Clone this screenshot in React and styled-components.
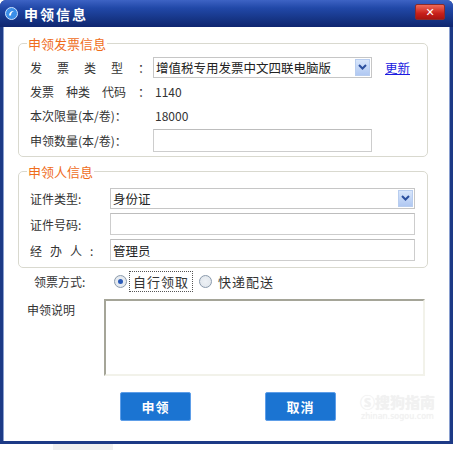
import React from 'react';
import styled, { createGlobalStyle } from 'styled-components';

const Global = createGlobalStyle`
  body {
    margin: 0;
    background: #ffffff;
    font-family: "Noto Sans CJK SC", "DejaVu Sans", sans-serif;
    font-size: 12px;
    color: #333;
  }
`;

const Win = styled.div`
  position: relative;
  width: 453px;
  height: 444px;
  box-sizing: border-box;
  display: flex;
  flex-direction: column;
  background: #1d3a86;
  border-radius: 6px 6px 0 0;
  padding: 0 3px 3px 3px;
`;

const TitleBar = styled.div`
  height: 27px;
  margin: 0 -3px;
  padding: 0 8px 0 5px;
  display: flex;
  align-items: center;
  gap: 6px;
  border-radius: 6px 6px 0 0;
  background: linear-gradient(#3d63c4 0%, #2148a8 30%, #163586 70%, #0f2670 100%);
`;

const Title = styled.span`
  color: #fff;
  font-weight: bold;
  font-size: 14px;
  letter-spacing: 2px;
  flex: 1;
`;

const CloseBtn = styled.div`
  width: 28px;
  height: 14px;
  border-radius: 2px;
  margin-top: -4px;
  background: linear-gradient(#f06a58, #c8201a 60%, #a81410);
  border: 1px solid #8b2a2a;
  display: flex;
  align-items: center;
  justify-content: center;
  color: #fff;
  font-size: 11px;
  font-weight: bold;
  line-height: 1;
`;

const Body = styled.div`
  flex: 1;
  background: #fff;
  border-left: 1px solid #8aa0d0;
  border-right: 1px solid #8aa0d0;
  padding: 7px 21px 0 14px;
  display: flex;
  flex-direction: column;
`;

const Group = styled.fieldset`
  margin: 0;
  border: 1px solid #d9d9cf;
  border-radius: 5px;
  padding: ${({ $pad }) => $pad || '4px 10px 8px 11px'};
  display: flex;
  flex-direction: column;
  gap: ${({ $gap }) => $gap || '3px'};
  & + & {
    margin-top: 5px;
  }
`;

const Legend = styled.legend`
  color: #ef6d1c;
  font-size: 13px;
  padding: 0 1px;
  margin-left: -3px;
`;

const Row = styled.div`
  display: flex;
  align-items: center;
  height: ${({ $h }) => $h || 21}px;
`;

const Label = styled.span`
  width: ${({ $w }) => $w}px;
  flex: none;
  white-space: pre;
`;

const Spaced = styled.span`
  letter-spacing: ${({ $ls }) => $ls}px;
`;

const Value = styled.span`
  padding-left: 2px;
`;

const Select = styled.div`
  width: ${({ $w }) => $w}px;
  height: 21px;
  box-sizing: border-box;
  border: 1px solid #c6c6c6;
  display: flex;
  align-items: center;
  padding-left: 2px;
  font-size: 12.5px;
  color: #222;
  overflow: hidden;
`;

const SelectText = styled.span`
  flex: 1;
  white-space: nowrap;
  overflow: hidden;
`;

const Arrow = styled.span`
  width: 15px;
  height: 17px;
  margin-right: 1px;
  flex: none;
  background: linear-gradient(#d8e6fb, #b0c8f2);
  border: 1px solid #b8cdef;
  box-sizing: border-box;
  display: flex;
  align-items: center;
  justify-content: center;
`;

const Input = styled.div`
  width: ${({ $w }) => $w}px;
  height: ${({ $hh }) => $hh || 22}px;
  box-sizing: border-box;
  border: 1px solid #cdcdcd;
  border-top-color: #bdbdbd;
  padding-left: 2px;
  display: flex;
  align-items: center;
  font-size: 12.5px;
  color: #222;
`;

const Link = styled.a`
  color: #1a1ae0;
  text-decoration: underline;
  margin-left: 13px;
  font-size: 12.5px;
`;

const Radio = styled.span`
  width: 11px;
  height: 11px;
  border-radius: 50%;
  border: 1px solid #8a9aac;
  background: radial-gradient(circle, #eef2f6 0%, #dfe4ea 100%);
  display: inline-flex;
  align-items: center;
  justify-content: center;
  margin-right: 2px;
  &::after {
    content: '';
    display: ${({ $on }) => ($on ? 'block' : 'none')};
    width: 5px;
    height: 5px;
    border-radius: 50%;
    background: #2a5ab8;
  }
`;

const RadioText = styled.span`
  padding: 0 3px;
  border: 1px dotted ${({ $focus }) => ($focus ? '#555' : 'transparent')};
  margin-right: 6px;
  font-size: 13px;
  letter-spacing: 1px;
`;

const Textarea = styled.div`
  width: 321px;
  height: 77px;
  box-sizing: border-box;
  border: 2px solid #f2f2ea;
  border-top-color: #a5a598;
  border-left-color: #a5a598;
  margin-left: 11px;
`;

const Buttons = styled.div`
  display: flex;
  gap: 74px;
  padding-left: 102px;
  margin-top: 13px;
`;

const Button = styled.button`
  width: 71px;
  height: 29px;
  border: 1px solid #5e9ee8;
  border-radius: 2px;
  background: #1b74d2;
  color: #fff;
  font-family: inherit;
  font-weight: bold;
  font-size: 13px;
  letter-spacing: 1px;
`;

const Watermark = styled.div`
  position: absolute;
  right: 18px;
  bottom: 22px;
  color: rgba(242, 242, 242, 0.95);
  text-shadow: 0 0 1px rgba(0, 0, 0, 0.08);
  text-align: center;
  line-height: 1.3;
`;

const WmBig = styled.div`
  font-size: 15px;
  font-weight: bold;
`;

const WmSmall = styled.div`
  font-size: 8px;
  font-family: "DejaVu Sans", sans-serif;
`;

const Below = styled.div`
  height: 6px;
  margin-left: 53px;
  width: 60px;
  background: #f0f0f0;
`;

function Chevron() {
  return (
    <svg width="9" height="6" viewBox="0 0 9 6">
      <path d="M1 1l3.5 3.5L8 1" fill="none" stroke="#2b4f9e" strokeWidth="2" />
    </svg>
  );
}

function WinIcon() {
  return (
    <svg width="13" height="13" viewBox="0 0 13 13">
      <circle cx="6.5" cy="6.5" r="6" fill="#3a8ee8" stroke="#cfe3ff" strokeWidth="1" />
      <path d="M4 8.5c0-3 2.5-5 5-4.5-1.5 0.5-3 2-3 4.5z" fill="#fff" />
    </svg>
  );
}

export default function App() {
  return (
    <>
      <Global />
      <Win>
        <TitleBar>
          <WinIcon />
          <Title>申领信息</Title>
          <CloseBtn>✕</CloseBtn>
        </TitleBar>
        <Body>
          <Group $gap="3px" $pad="3px 10px 4px 11px">
            <Legend>申领发票信息</Legend>
            <Row $h={22}>
              <Label $w={123}><Spaced $ls={15}>发票类型</Spaced>：</Label>
              <Select $w={219}>
                <SelectText>增值税专用发票中文四联电脑版</SelectText>
                <Arrow><Chevron /></Arrow>
              </Select>
              <Link>更新</Link>
            </Row>
            <Row>
              <Label $w={123}>发票　种类　代码　：</Label>
              <Value>1140</Value>
            </Row>
            <Row>
              <Label $w={123}>本次限量(本/卷)：</Label>
              <Value>18000</Value>
            </Row>
            <Row $h={23}>
              <Label $w={123}>申领数量(本/卷)：</Label>
              <Input $w={219} $hh={23} />
            </Row>
          </Group>
          <Group $gap="4px" $pad="6px 12px 6px 11px">
            <Legend>申领人信息</Legend>
            <Row $h={22}>
              <Label $w={80}>证件类型:</Label>
              <Select $w={305}>
                <SelectText>身份证</SelectText>
                <Arrow><Chevron /></Arrow>
              </Select>
            </Row>
            <Row $h={22}>
              <Label $w={80}>证件号码:</Label>
              <Input $w={305} />
            </Row>
            <Row $h={22}>
              <Label $w={80}><Spaced $ls={8}>经办人</Spaced>:</Label>
              <Input $w={305}>管理员</Input>
            </Row>
          </Group>
          <Row $h={26} style={{ paddingLeft: 16 }}>
            <Label $w={80}>领票方式:</Label>
            <Radio $on />
            <RadioText $focus>自行领取</RadioText>
            <Radio />
            <RadioText>快递配送</RadioText>
          </Row>
          <Row $h={80} style={{ alignItems: 'flex-start', marginTop: 5, paddingLeft: 9 }}>
            <Label $w={66} style={{ marginTop: 2 }}>申领说明</Label>
            <Textarea />
          </Row>
          <Buttons>
            <Button>申领</Button>
            <Button>取消</Button>
          </Buttons>
        </Body>
        <Watermark>
          <WmBig>Ⓢ搜狗指南</WmBig>
          <WmSmall>zhinan.sogou.com</WmSmall>
        </Watermark>
      </Win>
      <Below />
    </>
  );
}
